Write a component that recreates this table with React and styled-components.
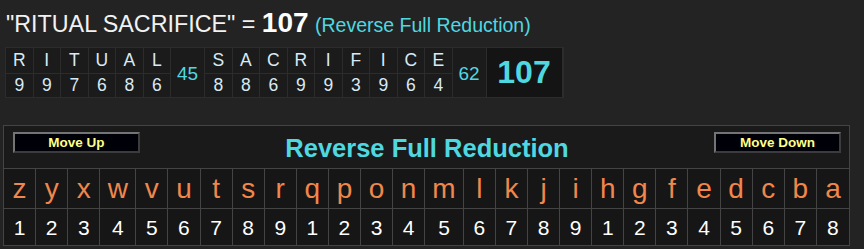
import styled, { createGlobalStyle } from "styled-components";

const GlobalStyle = createGlobalStyle`
  body {
    margin: 0;
    background: #232323;
    font-family: "Liberation Sans", Arial, sans-serif;
  }
`;

const Page = styled.div`
  padding-top: 9px;
`;

const Title = styled.div`
  height: 29px;
  padding-left: 6px;
  color: #f2f2f2;
  font-size: 23.3px;
  line-height: 28px;
  white-space: nowrap;
`;

const Total = styled.span`
  font-size: 28px;
  font-weight: bold;
  color: #ffffff;
`;

const Cipher = styled.span`
  font-size: 19.5px;
  color: #4fd8e0;
`;

const Breakdown = styled.div`
  display: flex;
  margin: 9px 0 0 5px;
  border: 1px solid #2c2c2c;
  width: fit-content;
  background: #1b1b1b;
`;

const Word = styled.div`
  display: flex;
`;

const LetterCol = styled.div`
  display: flex;
  flex-direction: column;
  width: 27.5px;
`;

const Cell = styled.div`
  height: ${(p) => p.$h}px;
  display: flex;
  align-items: center;
  justify-content: center;
  border-right: 1px solid #2c2c2c;
  border-bottom: ${(p) => (p.$top ? "1px solid #2c2c2c" : "none")};
  color: #d9eaf5;
  font-size: 17.5px;
`;

const Sum = styled.div`
  width: ${(p) => p.$w}px;
  display: flex;
  align-items: center;
  justify-content: center;
  background: ${(p) => (p.$grand ? "#141414" : "#1b1b1b")};
  border-right: 1px solid #2c2c2c;
  color: #4fd8e0;
  font-size: ${(p) => (p.$grand ? "32px" : "19px")};
  font-weight: ${(p) => (p.$grand ? "bold" : "normal")};
  padding-top: ${(p) => (p.$grand ? "0" : "3px")};
  box-sizing: border-box;
`;

const Panel = styled.div`
  margin: 27px 0 0 3px;
  width: 847px;
  border: 1px solid #444444;
  background: #1a1a1a;
  box-sizing: border-box;
`;

const PanelHead = styled.div`
  height: 43px;
  display: flex;
  align-items: flex-start;
  justify-content: space-between;
  padding: 6px 8px 0 9px;
  box-sizing: border-box;
  border-bottom: 1px solid #444444;
`;

const MoveButton = styled.button`
  width: 127px;
  height: 21px;
  background: #000008;
  border: 2px solid;
  border-color: #747474 #3c3c3c #3c3c3c #747474;
  color: #ffff88;
  font-family: "Liberation Sans", Arial, sans-serif;
  font-weight: bold;
  font-size: 13.5px;
  line-height: 15px;
  padding: 0;
  cursor: pointer;
`;

const PanelTitle = styled.div`
  color: #4fd8e0;
  font-size: 25.5px;
  font-weight: bold;
  line-height: 30px;
  padding-top: 1px;
`;

const Grid = styled.div`
  display: grid;
  grid-template-columns: ${(p) => p.$cols};
  grid-template-rows: 40px 36px;
  background: #161616;
`;

const GridCell = styled.div`
  display: flex;
  align-items: center;
  justify-content: center;
  border-right: ${(p) => (p.$last ? "none" : "1px solid #444444")};
  border-bottom: ${(p) => (p.$letter ? "1px solid #444444" : "none")};
  color: ${(p) => (p.$letter ? "#f0874c" : "#ffffff")};
  font-size: ${(p) => (p.$letter ? "28px" : "21px")};
  padding-top: ${(p) => (p.$letter ? "0" : "2px")};
  box-sizing: border-box;
`;

const words = [
  { letters: "RITUAL", values: [9, 9, 7, 6, 8, 6], sum: 45 },
  { letters: "SACRIFICE", values: [8, 8, 6, 9, 9, 3, 9, 6, 4], sum: 62 },
];

const alphabet = "zyxwvutsrqponmlkjihgfedcba".split("");
const wide = { w: "36px", m: "38.6px" };
const columns = alphabet.map((ch) => wide[ch] || "1fr").join(" ");

export default function App() {
  return (
    <Page>
      <GlobalStyle />
      <Title>
        "RITUAL SACRIFICE" = <Total>107</Total>{" "}
        <Cipher>(Reverse Full Reduction)</Cipher>
      </Title>
      <Breakdown>
        {words.map((w, wi) => (
          <Word key={wi}>
            {w.letters.split("").map((ch, i) => (
              <LetterCol key={i}>
                <Cell $h={25} $top>
                  {ch}
                </Cell>
                <Cell $h={23}>{w.values[i]}</Cell>
              </LetterCol>
            ))}
            <Sum $w={34}>{w.sum}</Sum>
          </Word>
        ))}
        <Sum $w={76} $grand>
          107
        </Sum>
      </Breakdown>
      <Panel>
        <PanelHead>
          <MoveButton>Move Up</MoveButton>
          <PanelTitle>Reverse Full Reduction</PanelTitle>
          <MoveButton>Move Down</MoveButton>
        </PanelHead>
        <Grid $cols={columns}>
          {alphabet.map((ch, i) => (
            <GridCell key={ch} $letter $last={i === 25}>
              {ch}
            </GridCell>
          ))}
          {alphabet.map((ch, i) => (
            <GridCell key={"n" + ch} $last={i === 25}>
              {(i % 9) + 1}
            </GridCell>
          ))}
        </Grid>
      </Panel>
    </Page>
  );
}
